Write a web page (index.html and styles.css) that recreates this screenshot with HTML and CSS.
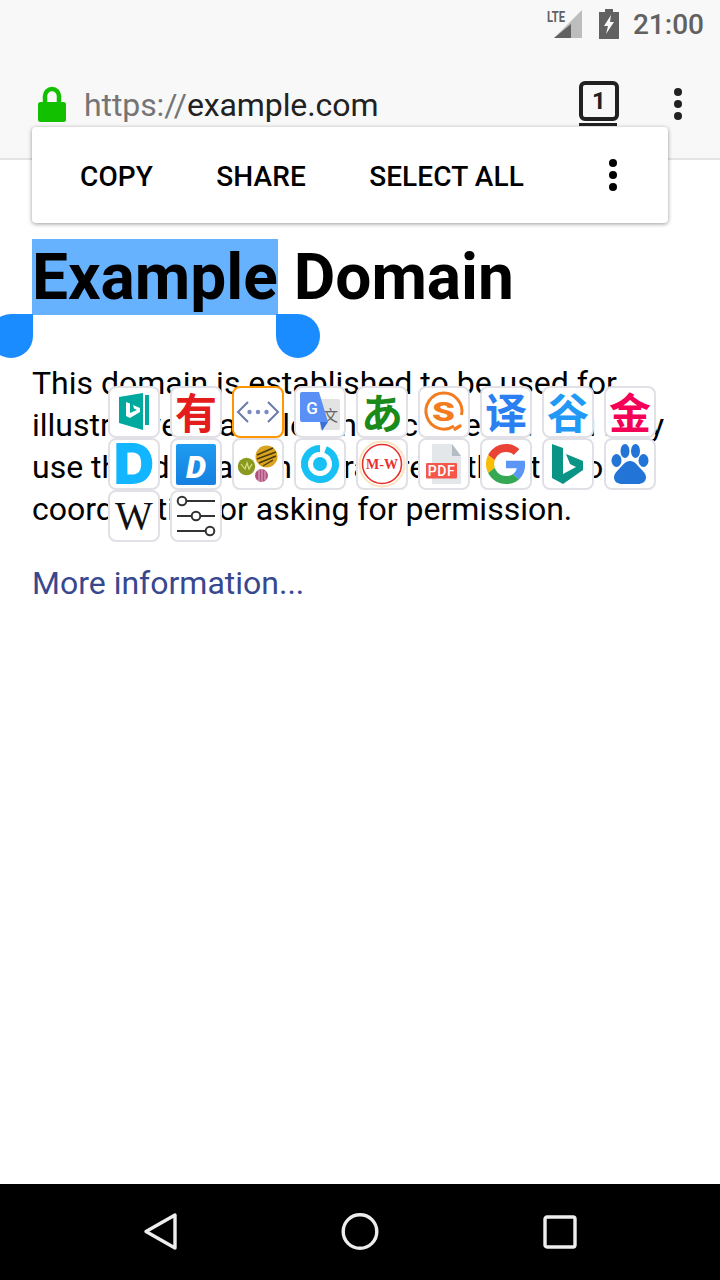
FILE: index.html
```html
<!DOCTYPE html>
<html lang="en">
  <head>
    <meta charset="UTF-8" />
    <meta name="viewport" content="width=device-width, initial-scale=1.0" />
    <title>Example Domain</title>
    <link rel="stylesheet" href="styles.css">
  </head>
  <body>
    <header class="chrome">
      <div class="status">
        <svg class="signal" width="36" height="30" viewBox="0 0 36 30">
          <polygon points="35,1 35,29 7,29" fill="#bdbdbd" />
          <polygon points="24,15 24,29 7,29" fill="#616161" />
          <text class="lte" x="0" y="13" textLength="18" lengthAdjust="spacingAndGlyphs">LTE</text>
        </svg>
        <svg class="battery" width="20" height="30" viewBox="0 0 20 30">
          <path d="M6 0h8v3h6v27H0V3h6z" fill="#616161" />
          <polygon points="12,6 5,17 9,17 7,25 15,13 11,13" fill="#f8f8f8" />
        </svg>
        <span class="clock">21:00</span>
      </div>
      <div class="toolbar">
        <svg class="lock" width="28" height="36" viewBox="0 0 28 36">
          <path d="M7 17V10a7 7 0 0 1 14 0v7" fill="none" stroke="#13c000" stroke-width="4.5" />
          <rect x="0" y="16" width="28" height="20" rx="2.5" fill="#13c000" />
        </svg>
        <div class="url"><span class="scheme">https://</span>example.com</div>
        <div class="tabs">
          <div class="tab-box">1</div>
          <div class="tab-line"></div>
        </div>
        <div class="dots"><i></i><i></i><i></i></div>
      </div>
    </header>

    <main class="page">
      <h1><span class="picked">Example</span> Domain</h1>
      <p>This domain is established to be used for illustrative examples in documents. You may use this domain in literature without prior coordination or asking for permission.</p>
      <p class="more"><a href="#">More information...</a></p>
    </main>

    <nav class="navbar">
      <svg width="36" height="40" viewBox="0 0 36 40">
        <polygon points="33,3 33,36 4,19.500" fill="none" stroke="#eee" stroke-width="3.400" stroke-linejoin="round" />
      </svg>
      <svg width="40" height="40" viewBox="0 0 40 40">
        <circle cx="20" cy="19.500" r="16.800" fill="none" stroke="#eee" stroke-width="3.400" />
      </svg>
      <svg width="36" height="36" viewBox="0 0 36 36">
        <rect x="3" y="3" width="30" height="30" rx="2" fill="none" stroke="#eee" stroke-width="3.400" />
      </svg>
    </nav>

    <!-- text selection toolbar -->
    <div class="popup">
      <span class="action">COPY</span>
      <span class="action">SHARE</span>
      <span class="action">SELECT ALL</span>
      <div class="dots popup-dots"><i></i><i></i><i></i></div>
    </div>
    <div class="handle handle-left"></div>
    <div class="handle handle-right"></div>

    <!-- search engine tiles -->
    <div class="tiles">
      <div class="tile">
        <svg viewBox="0 0 48 48">
          <polygon points="9,9 33,5 33,42 9,35" fill="#00a99d" />
          <rect x="35" y="7" width="4" height="30" fill="#00a99d" />
          <polygon points="16,14 20,15.500 20,25 27,22 24,20.500 23,17 30,20 30,24 20,30 16,28" fill="#fff" />
        </svg>
      </div>
      <div class="tile"><span class="cjk cjk-red">有</span></div>
      <div class="tile tile-active">
        <svg viewBox="0 0 48 48">
          <path d="M14 14 4 24l10 10M34 14l10 10-10 10" fill="none" stroke="#6b7aa8" stroke-width="2" />
          <circle cx="15.500" cy="24" r="2.200" fill="#7c8ac0" />
          <circle cx="24" cy="24" r="2.200" fill="#7c8ac0" />
          <circle cx="32.500" cy="24" r="2.200" fill="#7c8ac0" />
        </svg>
      </div>
      <div class="tile">
        <svg viewBox="0 0 48 48">
          <rect x="24" y="11" width="20" height="31" rx="2" fill="#e3e3e3" />
          <text class="wen" x="34.500" y="33">文</text>
          <path d="M6 4h17l9 30H6a2 2 0 0 1-2-2V6a2 2 0 0 1 2-2z" fill="#5a8ff5" />
          <polygon points="24,34 32,34 26,43" fill="#3b6fd8" />
          <text class="g-mark" x="16" y="26">G</text>
        </svg>
      </div>
      <div class="tile"><span class="cjk cjk-green">あ</span></div>
      <div class="tile">
        <svg viewBox="0 0 48 48">
          <path d="M34 38A18 18 0 1 1 41.500 27" fill="none" stroke="#f47c20" stroke-width="3" />
          <text class="sogou" x="12" y="33" textLength="23" lengthAdjust="spacingAndGlyphs">S</text>
          <path d="M35 41l5-3" stroke="#f47c20" stroke-width="3.500" stroke-linecap="round" />
        </svg>
      </div>
      <div class="tile"><span class="cjk cjk-blue">译</span></div>
      <div class="tile"><span class="cjk cjk-sky">谷</span></div>
      <div class="tile"><span class="cjk cjk-pink">金</span></div>

      <div class="tile"><span class="big-d">D</span></div>
      <div class="tile">
        <svg viewBox="0 0 48 48">
          <defs>
            <linearGradient id="dgrad" x1="0" y1="0" x2="0" y2="1">
              <stop offset="0" stop-color="#1e9cf0" />
              <stop offset="1" stop-color="#1580e0" />
            </linearGradient>
          </defs>
          <rect x="4" y="4" width="40" height="41" rx="2" fill="url(#dgrad)" />
          <text class="d-mark" x="24" y="38">D</text>
        </svg>
      </div>
      <div class="tile">
        <svg viewBox="0 0 48 48">
          <circle cx="32.500" cy="16.500" r="11" fill="#d9a520" />
          <path d="M23 15l16-7M23 19l19-7M25 23l17-7M29 26l10-6" stroke="#4a3a10" stroke-width="1.400" />
          <circle cx="12.500" cy="26.500" r="8.700" fill="#8a9a20" />
          <path d="M7 24l4 5 2-6 2 6 3-5" fill="none" stroke="#d8e080" stroke-width="1.200" />
          <circle cx="27.500" cy="35.500" r="6.500" fill="#b0507e" />
          <path d="M25 30v11M28 29v13M31 31v9" stroke="#e0b0c8" stroke-width="1" />
        </svg>
      </div>
      <div class="tile">
        <svg viewBox="0 0 48 48">
          <path d="M29.500 9.500A15.500 15.500 0 1 1 24 8.500" fill="none" stroke="#18c0f4" stroke-width="7" />
          <circle cx="24" cy="24" r="7" fill="#18c0f4" />
        </svg>
      </div>
      <div class="tile">
        <svg viewBox="0 0 48 48">
          <circle cx="24" cy="24" r="22.500" fill="#fff" stroke="#fbe3c0" stroke-width="2" />
          <circle cx="24" cy="24" r="19.500" fill="#fff" stroke="#e8302c" stroke-width="1.600" />
          <text class="mw" x="24" y="29">M-W</text>
        </svg>
      </div>
      <div class="tile">
        <svg viewBox="0 0 48 48">
          <path d="M12 4h20l9 12v28H12z" fill="#e4e7ea" />
          <polygon points="32,4 41,16 32,16" fill="#b4bcc4" />
          <rect x="6" y="23" width="31" height="15.500" rx="1" fill="#f4574a" />
          <text class="pdf" x="21.500" y="35.500">PDF</text>
        </svg>
      </div>
      <div class="tile">
        <svg viewBox="0 0 48 48">
          <g transform="translate(4 4) scale(.833)">
            <path fill="#ea4335" d="M24 9.500c3.540 0 6.710 1.220 9.210 3.600l6.850-6.850C35.900 2.380 30.470 0 24 0 14.620 0 6.510 5.380 2.560 13.220l7.980 6.190C12.430 13.720 17.740 9.500 24 9.500z" />
            <path fill="#5b96f7" d="M46.980 24.550c0-1.570-.15-3.090-.38-4.550H24v9.020h12.940c-.58 2.960-2.260 5.480-4.780 7.180l7.730 6c4.510-4.180 7.090-10.360 7.090-17.650z" />
            <path fill="#fbbc05" d="M10.530 28.590c-.48-1.450-.76-2.990-.76-4.590s.27-3.140.76-4.590l-7.980-6.190C.92 16.460 0 20.120 0 24c0 3.880.92 7.540 2.560 10.780l7.970-6.190z" />
            <path fill="#34a853" d="M24 48c6.480 0 11.930-2.130 15.890-5.810l-7.730-6c-2.150 1.450-4.920 2.300-8.160 2.300-6.260 0-11.570-4.220-13.470-9.910l-7.980 6.190C6.510 42.620 14.620 48 24 48z" />
          </g>
        </svg>
      </div>
      <div class="tile">
        <svg viewBox="0 0 48 48">
          <polygon points="8,4 19,8 19,34 32,27 26,24 22,14 39,21 39,30 19,44 8,38" fill="#0a9485" />
        </svg>
      </div>
      <div class="tile">
        <svg viewBox="0 0 48 48" fill="#2274d6">
          <ellipse cx="10.500" cy="20.500" rx="5" ry="6.500" />
          <ellipse cx="19" cy="11" rx="4.500" ry="7" />
          <ellipse cx="29.500" cy="11" rx="4.500" ry="7" />
          <ellipse cx="37.500" cy="20.500" rx="5" ry="6.500" />
          <path d="M24 21c5 0 7 4 10 7 3 3 6 6 6 9 0 5-4 7-8 7H16c-4 0-8-2-8-7 0-3 3-6 6-9 3-3 5-7 10-7z" />
        </svg>
      </div>

      <div class="tile"><span class="wiki">W</span></div>
      <div class="tile">
        <svg viewBox="0 0 48 48" fill="none" stroke="#333" stroke-width="2">
          <path d="M14 9h29M5 24h15M28 24h15M5 39h29" />
          <circle cx="10" cy="9" r="4.300" fill="#fff" />
          <circle cx="24" cy="24" r="4.300" fill="#fff" />
          <circle cx="38" cy="39" r="4.300" fill="#fff" />
        </svg>
      </div>
    </div>
  </body>
</html>
```

FILE: styles.css
```css
* {
  box-sizing: border-box;
}
body {
  margin: 0;
  height: 1280px;
  display: flex;
  flex-direction: column;
  position: relative;
  overflow: hidden;
  background: #fff;
  font-family: Roboto, sans-serif;
  color: #000;
}

/* browser chrome */
.chrome {
  height: 160px;
  background: #f8f8f8;
  border-bottom: 2px solid #e4e4e4;
}
.status {
  height: 48px;
  display: flex;
  align-items: center;
  justify-content: flex-end;
  padding-right: 16px;
}
.signal {
  margin-right: 16px;
}
.lte {
  font-size: 15px;
  font-weight: 700;
  fill: #616161;
}
.battery {
  margin-right: 14px;
}
.clock {
  font-size: 28px;
  font-weight: 500;
  color: #616161;
}
.toolbar {
  height: 110px;
  display: flex;
  align-items: flex-start;
  padding: 38px 38px 0 38px;
}
.lock {
  flex: none;
}
.url {
  margin-left: 18px;
  flex: 1;
  font-size: 32px;
  line-height: 38px;
  letter-spacing: -0.1px;
  color: #212121;
}
.scheme {
  color: #757575;
}
.tabs {
  width: 40px;
  margin-top: -5px;
}
.tab-box {
  width: 40px;
  height: 40px;
  border: 4px solid #212121;
  border-radius: 6px;
  text-align: center;
  font-size: 24px;
  font-weight: 700;
  line-height: 32px;
  color: #212121;
}
.tab-line {
  width: 38px;
  height: 3px;
  margin-top: 2px;
  background: #212121;
}
.dots {
  margin-left: 55px;
  display: flex;
  flex-direction: column;
  gap: 4px;
  margin-top: 2px;
}
.dots i {
  width: 8px;
  height: 8px;
  border-radius: 50%;
  background: #212121;
}

/* page content */
.page {
  flex: 1;
  padding: 80px 32px 0;
}
h1 {
  margin: 0;
  font-size: 64px;
  font-weight: 700;
  line-height: 75px;
}
.picked {
  padding-top: 1px;
  background: #66b2ff;
}
p {
  margin: 47px 0 0;
  font-size: 32px;
  line-height: 42px;
}
.more {
  margin-top: 32px;
}
a {
  color: #38488f;
  text-decoration: none;
}
.navbar {
  height: 96px;
  flex: none;
  background: #000;
  display: flex;
  align-items: center;
  justify-content: space-between;
  padding: 0 142px;
}

/* selection toolbar */
.popup {
  position: absolute;
  left: 32px;
  top: 127px;
  width: 636px;
  height: 96px;
  display: flex;
  align-items: center;
  padding: 2px 0 0 16px;
  background: #fff;
  border-radius: 4px;
  box-shadow: 0 1px 4px rgba(0, 0, 0, 0.4);
}
.action {
  padding: 0 31.3px 0 32px;
  font-size: 28px;
  font-weight: 500;
  letter-spacing: 0.1px;
}
.popup-dots {
  margin: -2px 0 0 53.5px;
}
.popup-dots i {
  background: #000;
}
.handle {
  position: absolute;
  top: 314px;
  width: 44px;
  height: 44px;
  background: #1a8cff;
  border-radius: 50%;
}
.handle-left {
  left: -11px;
  border-top-right-radius: 0;
}
.handle-right {
  left: 276px;
  border-top-left-radius: 0;
}

/* tiles */
.tiles {
  position: absolute;
  left: 108px;
  top: 386px;
  width: 548px;
  display: flex;
  flex-wrap: wrap;
  column-gap: 10px;
}
.tile {
  width: 52px;
  height: 52px;
  border: 2px solid #e0e0e6;
  border-radius: 8px;
  background: #fff;
  display: flex;
  align-items: center;
  justify-content: center;
}
.tile svg {
  width: 48px;
  height: 48px;
  display: block;
}
.tile-active {
  border-color: #ff9800;
}
.cjk {
  margin-top: -3px;
  font-family: "Noto Sans CJK SC", sans-serif;
  font-weight: 700;
  font-size: 42px;
  line-height: 48px;
}
.cjk-red {
  color: #e51c1c;
}
.cjk-green {
  color: #1a8a1a;
}
.cjk-blue {
  color: #2b7ff0;
}
.cjk-sky {
  color: #2299f5;
}
.cjk-pink {
  color: #f50057;
}
.wen {
  font-family: "Noto Sans CJK SC", sans-serif;
  font-size: 15px;
  text-anchor: middle;
  fill: #666;
}
.g-mark {
  font-size: 17px;
  font-weight: 500;
  text-anchor: middle;
  fill: #fff;
}
.sogou {
  font-size: 25px;
  font-weight: 900;
  fill: #f47c20;
}
.big-d {
  font-family: Inter, sans-serif;
  font-size: 56px;
  font-weight: 900;
  line-height: 48px;
  color: #12b5ff;
}
.d-mark {
  font-size: 32px;
  font-weight: 900;
  font-style: italic;
  text-anchor: middle;
  fill: #fff;
}
.mw {
  font-family: "Liberation Serif", serif;
  font-size: 14px;
  font-weight: 700;
  text-anchor: middle;
  fill: #e8302c;
}
.pdf {
  font-size: 14px;
  font-weight: 500;
  letter-spacing: 0.5px;
  text-anchor: middle;
  fill: #fff;
}
.wiki {
  font-family: "Liberation Serif", serif;
  font-size: 40px;
  line-height: 48px;
  color: #111;
}
```
